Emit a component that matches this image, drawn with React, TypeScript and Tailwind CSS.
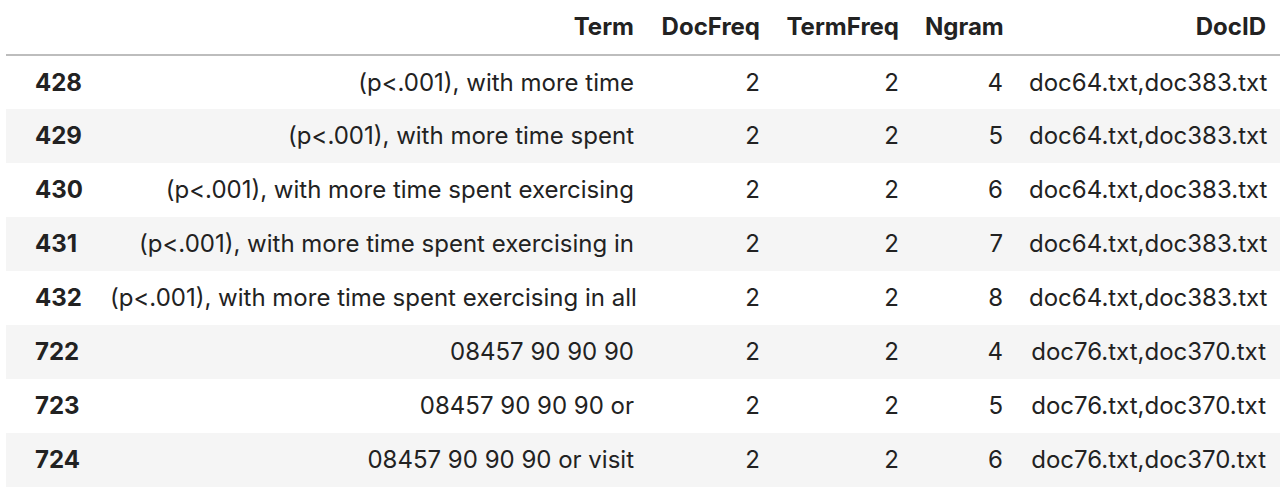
import React from "react";

const rows = [
  ["428", "(p<.001), with more time", "2", "2", "4", "doc64.txt,doc383.txt"],
  ["429", "(p<.001), with more time spent", "2", "2", "5", "doc64.txt,doc383.txt"],
  ["430", "(p<.001), with more time spent exercising", "2", "2", "6", "doc64.txt,doc383.txt"],
  ["431", "(p<.001), with more time spent exercising in", "2", "2", "7", "doc64.txt,doc383.txt"],
  ["432", "(p<.001), with more time spent exercising in all", "2", "2", "8", "doc64.txt,doc383.txt"],
  ["722", "08457 90 90 90", "2", "2", "4", "doc76.txt,doc370.txt"],
  ["723", "08457 90 90 90 or", "2", "2", "5", "doc76.txt,doc370.txt"],
  ["724", "08457 90 90 90 or visit", "2", "2", "6", "doc76.txt,doc370.txt"],
];

export default function App() {
  return (
    <div className="w-[1288px] h-[494px] bg-white pl-[6px] pt-0" style={{ fontFamily: "Inter, 'Liberation Sans', Arial, sans-serif" }}>
      <table className="table-fixed border-collapse text-[24px] text-[#222222] w-[1274px]">
        <colgroup>
          <col className="w-[91px]" />
          <col className="w-[550px]" />
          <col className="w-[126px]" />
          <col className="w-[139px]" />
          <col className="w-[104px]" />
          <col className="w-[264px]" />
        </colgroup>
        <thead>
          <tr className="h-[55px] border-b-2 border-[#bdbdbd]">
            <th></th>
            <th className="text-right font-bold px-[13px]">Term</th>
            <th className="text-right font-bold px-[13px]">DocFreq</th>
            <th className="text-right font-bold px-[13px]">TermFreq</th>
            <th className="text-right font-bold px-[13px]">Ngram</th>
            <th className="text-right font-bold pl-[13px] pr-[14px]">DocID</th>
          </tr>
        </thead>
        <tbody>
          {rows.map((r, i) => (
            <tr key={r[0]} className={i % 2 === 1 ? "h-[54px] bg-[#f5f5f5]" : "h-[54px] bg-white"}>
              <th className="text-left font-bold pl-[29px] pr-[13px]">{r[0]}</th>
              <td className="text-right px-[13px] whitespace-nowrap">{r[1]}</td>
              <td className="text-right px-[13px]">{r[2]}</td>
              <td className="text-right px-[13px]">{r[3]}</td>
              <td className="text-right px-[13px]">{r[4]}</td>
              <td className="text-right pl-[13px] pr-[14px] whitespace-nowrap">{r[5]}</td>
            </tr>
          ))}
        </tbody>
      </table>
    </div>
  );
}
